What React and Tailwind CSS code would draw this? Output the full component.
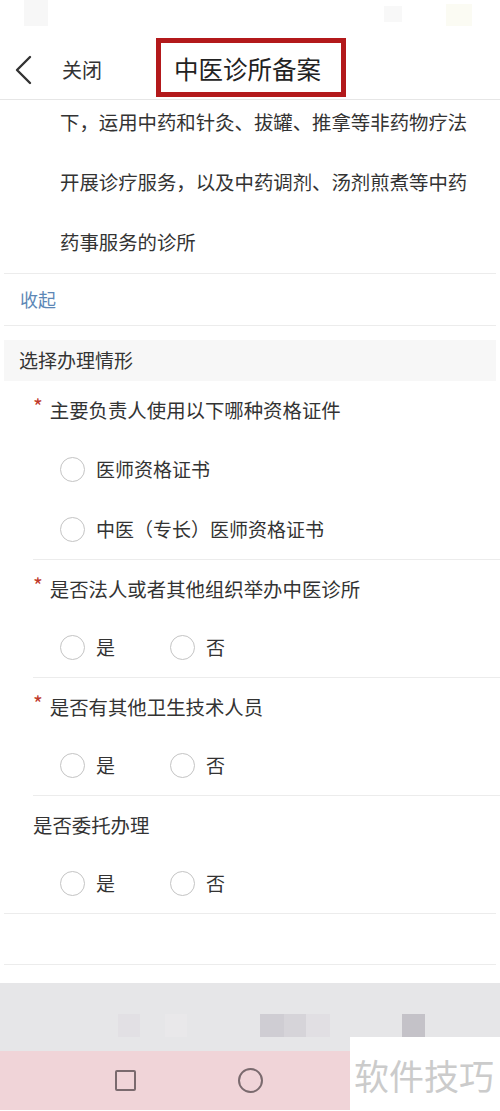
import { Fragment } from "react";

const font = { fontFamily: '"Noto Sans CJK SC", "Noto Sans", sans-serif' };

function Radio({ label }) {
  return (
    <div className="flex items-center">
      <span className="h-[25px] w-[25px] shrink-0 rounded-full border-[1.5px] border-[#c4c4c4] bg-white" />
      <span className="ml-[11px] text-[19px] text-[#333]">{label}</span>
    </div>
  );
}

function YesNo() {
  return (
    <div className="flex h-[59px] items-center pl-[60px]">
      <div className="w-[110px]">
        <Radio label="是" />
      </div>
      <Radio label="否" />
    </div>
  );
}

function Question({ text, required = true }) {
  return (
    <div className="flex h-[58px] items-center pl-[33px]">
      {required ? (
        <span className="mr-[7px] -mt-[8px] text-[21px] leading-none text-[#c0392b]">*</span>
      ) : null}
      <span className="text-[19.4px] text-[#333]">{text}</span>
    </div>
  );
}

function Divider({ inset = false }) {
  return <div className={`h-px bg-[#ececec] ${inset ? "ml-[33px]" : "mx-[4px]"}`} />;
}

export default function App() {
  return (
    <div className="relative h-[1111px] w-[500px] overflow-hidden bg-white" style={font}>
      {/* status bar */}
      <div className="relative h-[33px] bg-white">
        <div className="absolute left-[24px] top-0 h-[26px] w-[24px] bg-[#f7f7f7]" />
        <div className="absolute left-[384px] top-[6px] h-[16px] w-[18px] bg-[#f8f8f8]" />
        <div className="absolute left-[446px] top-[4px] h-[22px] w-[26px] bg-[#fbfbf3]" />
      </div>

      {/* header */}
      <div className="relative z-10 flex h-[67px] items-center border-b border-[#e6e6e6] bg-white">
        <svg className="ml-[12px] mt-[7px]" width="22" height="30" viewBox="0 0 22 30" fill="none">
          <path d="M18 2 L5 15 L18 28" stroke="#333" strokeWidth="2.4" strokeLinecap="round" strokeLinejoin="round" />
        </svg>
        <span className="ml-[28px] mt-[7px] text-[20px] text-[#333]">关闭</span>
        <div className="ml-[54px] mt-[2px] flex h-[59px] w-[190px] items-center border-[5px] border-[#b3191b] pl-[13px] pt-[4px]">
          <span className="text-[24.5px] text-[#222]">中医诊所备案</span>
        </div>
      </div>

      {/* description */}
      <div className="h-[173px] overflow-hidden">
        <p className="-mt-[8px] pl-[60px] pr-[30px] text-[19.4px] leading-[60px] text-[#333]">
          下，运用中药和针灸、拔罐、推拿等非药物疗法
          <br />
          开展诊疗服务，以及中药调剂、汤剂煎煮等中药
          <br />
          药事服务的诊所
        </p>
      </div>
      <Divider />
      <div className="flex h-[51px] items-center pl-[20px] text-[18px] text-[#5d87b6]">收起</div>
      <Divider />
      <div className="h-[14px]" />

      <div className="mx-[4px] flex h-[41px] items-center bg-[#f7f7f7] pl-[15px] text-[19px] text-[#333]">
        选择办理情形
      </div>

      <Question text="主要负责人使用以下哪种资格证件" />
      <div className="flex h-[60px] items-center pl-[60px]">
        <Radio label="医师资格证书" />
      </div>
      <div className="flex h-[60px] items-center pl-[60px]">
        <Radio label="中医（专长）医师资格证书" />
      </div>
      <Divider inset />

      <Question text="是否法人或者其他组织举办中医诊所" />
      <YesNo />
      <Divider inset />

      <Question text="是否有其他卫生技术人员" />
      <YesNo />
      <Divider inset />

      <Question text="是否委托办理" required={false} />
      <YesNo />
      <Divider />

      <div className="h-[50px]" />
      <Divider />
      <div className="h-[18px]" />

      {/* blurred bottom bar */}
      <div className="relative h-[68px] bg-[#e6e6e8]">
        <div className="absolute left-[118px] top-[31px] h-[23px] w-[22px] bg-[#e2e0e4]" />
        <div className="absolute left-[165px] top-[31px] h-[23px] w-[22px] bg-[#e9e8ea]" />
        <div className="absolute left-[260px] top-[31px] h-[23px] w-[24px] bg-[#cfcdd3]" />
        <div className="absolute left-[284px] top-[31px] h-[23px] w-[22px] bg-[#d6d4d9]" />
        <div className="absolute left-[306px] top-[31px] h-[23px] w-[24px] bg-[#e1dfe3]" />
        <div className="absolute left-[402px] top-[31px] h-[23px] w-[23px] bg-[#c4c2c8]" />
      </div>

      {/* nav bar */}
      <div className="flex h-[59px] items-center bg-[#f0d4d8]">
        <div className="ml-[115px] h-[21px] w-[21px] rounded-[2px] border-[2px] border-[#7a6a6e]" />
        <div className="ml-[102px] h-[25px] w-[25px] rounded-full border-[2px] border-[#7a6a6e]" />
      </div>

      {/* watermark */}
      <div className="absolute left-[350px] top-[1037px] flex h-[74px] w-[150px] items-center bg-white pl-[4px]">
        <span className="text-[35px] leading-none text-[#cbcbcb]">软件技巧</span>
      </div>
    </div>
  );
}
